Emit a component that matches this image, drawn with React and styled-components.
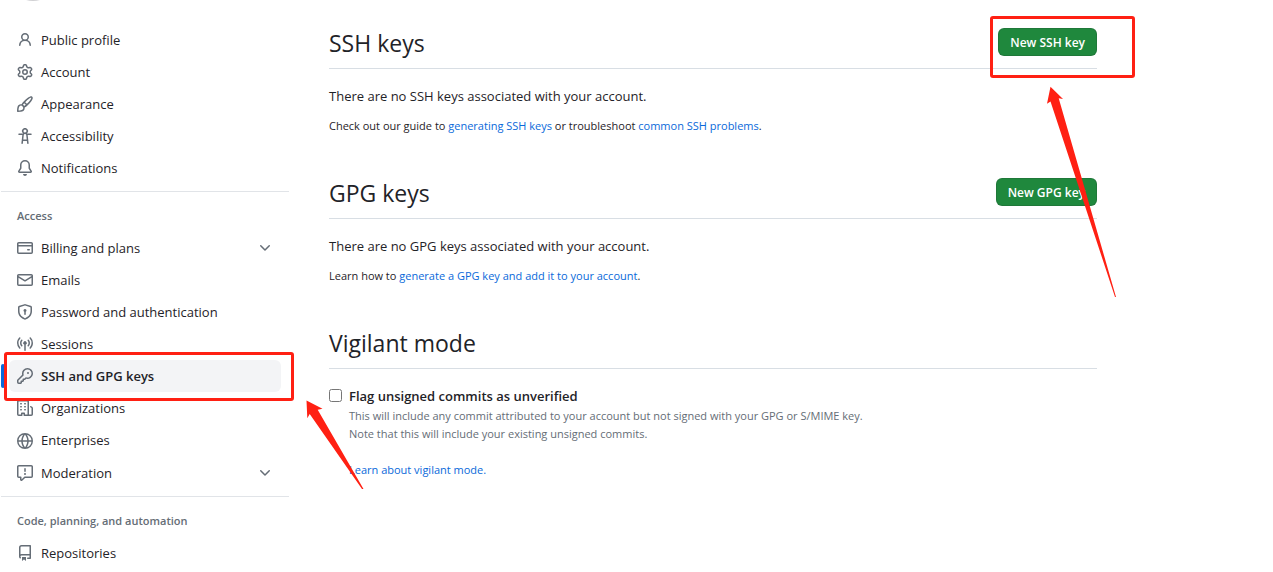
import React from 'react';
import styled, { createGlobalStyle } from 'styled-components';

const GlobalStyle = createGlobalStyle`
  body {
    margin: 0;
    background: #ffffff;
    color: #1f2328;
    font-family: 'Open Sans', 'Noto Sans', sans-serif;
    font-size: 13px;
    line-height: 21px;
  }
  * {
    box-sizing: border-box;
  }
`;

const icons = {
  person:
    'M10.561 8.073a6.005 6.005 0 0 1 3.432 5.142.75.75 0 1 1-1.498.07 4.5 4.5 0 0 0-8.99 0 .75.75 0 0 1-1.498-.07 6.004 6.004 0 0 1 3.431-5.142 3.999 3.999 0 1 1 5.123 0ZM10.5 5a2.5 2.5 0 1 0-5 0 2.5 2.5 0 0 0 5 0Z',
  gear: 'M8 0a8.2 8.2 0 0 1 .701.031C9.444.095 9.99.645 10.16 1.29l.288 1.107c.018.066.079.158.212.224.231.114.454.243.668.386.123.082.233.09.299.071l1.103-.303c.644-.176 1.392.021 1.82.63.27.385.506.792.704 1.218.315.675.111 1.422-.364 1.891l-.814.806c-.049.048-.098.147-.088.294.016.257.016.515 0 .772-.01.147.038.246.088.294l.814.806c.475.469.679 1.216.364 1.891a7.977 7.977 0 0 1-.704 1.217c-.428.61-1.176.807-1.82.63l-1.102-.302c-.067-.019-.177-.011-.3.071a5.909 5.909 0 0 1-.668.386c-.133.066-.194.158-.211.224l-.29 1.106c-.168.646-.715 1.196-1.458 1.26a8.006 8.006 0 0 1-1.402 0c-.743-.064-1.289-.614-1.458-1.26l-.289-1.106c-.018-.066-.079-.158-.212-.224a5.738 5.738 0 0 1-.668-.386c-.123-.082-.233-.09-.299-.071l-1.103.303c-.644.176-1.392-.021-1.82-.63a8.12 8.12 0 0 1-.704-1.218c-.315-.675-.111-1.422.363-1.891l.815-.806c.05-.048.098-.147.088-.294a6.214 6.214 0 0 1 0-.772c.01-.147-.038-.246-.088-.294l-.815-.806C.635 6.045.431 5.298.746 4.623a7.92 7.92 0 0 1 .704-1.217c.428-.61 1.176-.807 1.82-.63l1.102.302c.067.019.177.011.3-.071.214-.143.437-.272.668-.386.133-.066.194-.158.211-.224l.29-1.106C6.009.645 6.556.095 7.299.03 7.53.01 7.764 0 8 0Zm-.571 1.525c-.036.003-.108.036-.137.146l-.289 1.105c-.147.561-.549.967-.998 1.189-.173.086-.34.183-.5.29-.417.278-.97.423-1.529.27l-1.103-.303c-.109-.03-.175.016-.195.045-.22.312-.412.644-.573.99-.014.031-.021.11.059.19l.815.806c.411.406.562.957.53 1.456a4.709 4.709 0 0 0 0 .582c.032.499-.119 1.05-.53 1.456l-.815.806c-.081.08-.073.159-.059.19.162.346.353.677.573.989.02.03.085.076.195.046l1.102-.303c.56-.153 1.113-.008 1.53.27.161.107.328.204.501.29.447.222.85.629.997 1.189l.289 1.105c.029.109.101.143.137.146a6.6 6.6 0 0 0 1.142 0c.036-.003.108-.036.137-.146l.289-1.105c.147-.561.549-.967.998-1.189.173-.086.34-.183.5-.29.417-.278.97-.423 1.529-.27l1.103.303c.109.029.175-.016.195-.045.22-.313.411-.644.573-.99.014-.031.021-.11-.059-.19l-.815-.806c-.411-.406-.562-.957-.53-1.456a4.709 4.709 0 0 0 0-.582c-.032-.499.119-1.05.53-1.456l.815-.806c.081-.08.073-.159.059-.19a6.464 6.464 0 0 0-.573-.989c-.02-.03-.085-.076-.195-.046l-1.102.303c-.56.153-1.113.008-1.53-.27a4.44 4.44 0 0 0-.501-.29c-.447-.222-.85-.629-.997-1.189l-.289-1.105c-.029-.11-.101-.143-.137-.146a6.6 6.6 0 0 0-1.142 0ZM11 8a3 3 0 1 1-6 0 3 3 0 0 1 6 0ZM9.5 8a1.5 1.5 0 1 0-3.001.001A1.5 1.5 0 0 0 9.5 8Z',
  paintbrush:
    'M11.134 1.535c.7-.509 1.416-.942 2.076-1.155.649-.21 1.463-.267 2.069.34.603.601.568 1.411.368 2.07-.202.668-.624 1.39-1.125 2.096-1.011 1.424-2.496 2.987-3.775 4.249-1.098 1.084-2.132 1.839-3.04 2.3a3.744 3.744 0 0 1-1.055 3.217c-.431.431-1.065.691-1.657.861-.614.177-1.294.287-1.914.357A21.151 21.151 0 0 1 .797 16H.743a.75.75 0 0 1-.743-.742v-.054a21.25 21.25 0 0 1 .13-2.284c.067-.647.187-1.287.358-1.914.17-.591.43-1.226.86-1.657a3.746 3.746 0 0 1 3.227-1.054c.466-.893 1.225-1.907 2.314-2.982 1.271-1.255 2.833-2.75 4.245-3.777ZM1.62 13.089c-.051.464-.086.929-.104 1.395.466-.018.932-.053 1.396-.104a10.511 10.511 0 0 0 1.668-.309c.526-.151.856-.325 1.011-.48a2.25 2.25 0 1 0-3.182-3.182c-.155.155-.329.485-.48 1.01a10.515 10.515 0 0 0-.309 1.67Zm10.396-10.34c-1.224.89-2.605 2.189-3.822 3.384l1.718 1.718c1.21-1.205 2.51-2.597 3.387-3.833.47-.662.78-1.227.912-1.662.134-.444.032-.551.009-.575h-.001V1.78c-.014-.014-.113-.113-.548.027-.432.14-.995.462-1.655.942Zm-4.832 7.266-.001.001a9.859 9.859 0 0 0 1.63-1.142L7.155 7.216a9.7 9.7 0 0 0-1.161 1.607c.482.302.889.71 1.19 1.192Z',
  accessibility:
    'M9.923 5.302c.063.063.122.129.178.198H14A.75.75 0 0 1 14 7h-3.3l.578 5.163.362 2.997a.75.75 0 0 1-1.49.18L9.868 13H6.132l-.282 2.34a.75.75 0 0 1-1.49-.18l.362-2.997L5.3 7H2a.75.75 0 0 1 0-1.5h3.9a2.54 2.54 0 0 1 .176-.198 3 3 0 1 1 3.847 0ZM9.2 7.073h-.001a1.206 1.206 0 0 0-2.398 0L6.305 11.5h3.39ZM9.5 3a1.5 1.5 0 1 0-3.001.001A1.5 1.5 0 0 0 9.5 3Z',
  bell: 'M8 16a2 2 0 0 0 1.985-1.75c.017-.137-.097-.25-.235-.25h-3.5c-.138 0-.252.113-.235.25A2 2 0 0 0 8 16ZM3 5a5 5 0 0 1 10 0v2.947c0 .05.015.098.042.139l1.703 2.555A1.519 1.519 0 0 1 13.482 13H2.518a1.516 1.516 0 0 1-1.263-2.36l1.703-2.554A.255.255 0 0 0 3 7.947Zm5-3.5A3.5 3.5 0 0 0 4.5 5v2.947c0 .346-.102.683-.294.97l-1.703 2.556a.017.017 0 0 0-.003.01l.001.006c0 .002.002.004.004.006l.006.004.007.001h10.964l.007-.001.006-.004.004-.006.001-.007a.017.017 0 0 0-.003-.01l-1.703-2.554a1.745 1.745 0 0 1-.294-.97V5A3.5 3.5 0 0 0 8 1.5Z',
  card: 'M10.75 9a.75.75 0 0 0 0 1.5h1.5a.75.75 0 0 0 0-1.5h-1.5ZM0 3.75C0 2.784.784 2 1.75 2h12.5c.966 0 1.75.784 1.75 1.75v8.5A1.75 1.75 0 0 1 14.25 14H1.75A1.75 1.75 0 0 1 0 12.25ZM14.5 6.5h-13v5.75c0 .138.112.25.25.25h12.5a.25.25 0 0 0 .25-.25Zm0-2.75a.25.25 0 0 0-.25-.25H1.75a.25.25 0 0 0-.25.25V5h13Z',
  mail: 'M1.75 2h12.5c.966 0 1.75.784 1.75 1.75v8.5A1.75 1.75 0 0 1 14.25 14H1.75A1.75 1.75 0 0 1 0 12.25v-8.5C0 2.784.784 2 1.75 2ZM1.5 12.251c0 .138.112.25.25.25h12.5a.25.25 0 0 0 .25-.25V5.809L8.38 9.397a.75.75 0 0 1-.76 0L1.5 5.809v6.442Zm13-8.181v-.32a.25.25 0 0 0-.25-.25H1.75a.25.25 0 0 0-.25.25v.32L8 7.88Z',
  shield:
    'm8.533.133 5.25 1.68A1.75 1.75 0 0 1 15 3.48V7c0 1.566-.32 3.182-1.303 4.682-.983 1.498-2.585 2.813-5.032 3.855a1.697 1.697 0 0 1-1.33 0c-2.447-1.042-4.049-2.357-5.032-3.855C1.32 10.182 1 8.566 1 7V3.48a1.75 1.75 0 0 1 1.217-1.667l5.25-1.68a1.748 1.748 0 0 1 1.066 0Zm-.61 1.429.001.001-5.25 1.68a.251.251 0 0 0-.174.237V7c0 1.36.275 2.666 1.057 3.859.784 1.194 2.121 2.342 4.366 3.298a.196.196 0 0 0 .154 0c2.245-.957 3.582-2.103 4.366-3.297C13.225 9.666 13.5 8.358 13.5 7V3.48a.25.25 0 0 0-.174-.238l-5.25-1.68a.25.25 0 0 0-.153 0ZM9.5 6.5c0 .536-.286 1.032-.75 1.3v2.45a.75.75 0 0 1-1.5 0V7.8A1.5 1.5 0 1 1 9.5 6.5Z',
  broadcast:
    'M8.75 8.582v5.668a.75.75 0 0 1-1.5 0V8.582a1.75 1.75 0 1 1 1.5 0Zm3.983-7.125a.75.75 0 0 1 1.06.026A7.976 7.976 0 0 1 16 7c0 2.139-.84 4.083-2.207 5.517a.75.75 0 1 1-1.086-1.034A6.474 6.474 0 0 0 14.5 7a6.474 6.474 0 0 0-1.793-4.483.75.75 0 0 1 .026-1.06Zm-9.466 0c.3.286.312.76.026 1.06A6.474 6.474 0 0 0 1.5 7a6.47 6.47 0 0 0 1.793 4.483.75.75 0 0 1-1.086 1.034A7.973 7.973 0 0 1 0 7c0-2.139.84-4.083 2.207-5.517a.75.75 0 0 1 1.06-.026Zm8.556 2.321A4.988 4.988 0 0 1 13 7a4.988 4.988 0 0 1-1.177 3.222.75.75 0 1 1-1.146-.967A3.487 3.487 0 0 0 11.5 7c0-.86-.309-1.645-.823-2.255a.75.75 0 0 1 1.146-.967Zm-6.492.958A3.48 3.48 0 0 0 4.5 7a3.48 3.48 0 0 0 .823 2.255.75.75 0 0 1-1.146.967A4.981 4.981 0 0 1 3 7a4.982 4.982 0 0 1 1.188-3.236.75.75 0 1 1 1.143.972Z',
  key: 'M10.5 0a5.499 5.499 0 1 1-1.288 10.848l-.932.932a.749.749 0 0 1-.53.22H7v.75a.749.749 0 0 1-.22.53l-.5.5a.749.749 0 0 1-.53.22H5v.75a.749.749 0 0 1-.22.53l-.5.5a.749.749 0 0 1-.53.22h-2A1.75 1.75 0 0 1 0 14.25v-2c0-.199.079-.389.22-.53l4.932-4.932A5.5 5.5 0 0 1 10.5 0Zm-4 5.5c-.001.431.069.86.205 1.269a.75.75 0 0 1-.181.768L1.5 12.56v1.69c0 .138.112.25.25.25h1.69l.06-.06v-1.19a.75.75 0 0 1 .75-.75h1.19l.06-.06v-1.19a.75.75 0 0 1 .75-.75h1.19l1.023-1.025a.75.75 0 0 1 .768-.18A4 4 0 1 0 6.5 5.5ZM11 6a1 1 0 1 1 0-2 1 1 0 0 1 0 2Z',
  organization:
    'M1.75 16A1.75 1.75 0 0 1 0 14.25V1.75C0 .784.784 0 1.75 0h8.5C11.216 0 12 .784 12 1.75v12.5c0 .085-.006.168-.018.25h2.268a.25.25 0 0 0 .25-.25V8.285a.25.25 0 0 0-.111-.208l-1.055-.703a.749.749 0 1 1 .832-1.248l1.055.703c.487.325.779.871.779 1.456v5.965A1.75 1.75 0 0 1 14.25 16h-3.5a.766.766 0 0 1-.197-.026c-.099.017-.2.026-.303.026h-3a.75.75 0 0 1-.75-.75V14h-1v1.25a.75.75 0 0 1-.75.75Zm-.25-1.75c0 .138.112.25.25.25H4v-1.25a.75.75 0 0 1 .75-.75h2.5a.75.75 0 0 1 .75.75v1.25h2.25a.25.25 0 0 0 .25-.25V1.75a.25.25 0 0 0-.25-.25h-8.5a.25.25 0 0 0-.25.25ZM3.75 6h.5a.75.75 0 0 1 0 1.5h-.5a.75.75 0 0 1 0-1.5ZM3 3.75A.75.75 0 0 1 3.75 3h.5a.75.75 0 0 1 0 1.5h-.5A.75.75 0 0 1 3 3.75Zm4 3A.75.75 0 0 1 7.75 6h.5a.75.75 0 0 1 0 1.5h-.5A.75.75 0 0 1 7 6.75ZM7.75 3h.5a.75.75 0 0 1 0 1.5h-.5a.75.75 0 0 1 0-1.5ZM3 9.75A.75.75 0 0 1 3.75 9h.5a.75.75 0 0 1 0 1.5h-.5A.75.75 0 0 1 3 9.75ZM7.75 9h.5a.75.75 0 0 1 0 1.5h-.5a.75.75 0 0 1 0-1.5Z',
  globe:
    'M8 0a8 8 0 1 1 0 16A8 8 0 0 1 8 0ZM5.78 8.75a9.64 9.64 0 0 0 1.363 4.177c.255.426.542.832.857 1.215.245-.296.551-.705.857-1.215A9.64 9.64 0 0 0 10.22 8.75Zm4.44-1.5a9.64 9.64 0 0 0-1.363-4.177c-.307-.51-.612-.919-.857-1.215a9.927 9.927 0 0 0-.857 1.215A9.64 9.64 0 0 0 5.78 7.25Zm-5.944 1.5H1.543a6.507 6.507 0 0 0 4.666 5.5c-.123-.181-.24-.365-.352-.552-.715-1.192-1.437-2.874-1.581-4.948Zm-2.733-1.5h2.733c.144-2.074.866-3.756 1.58-4.948.12-.197.237-.381.353-.552a6.507 6.507 0 0 0-4.666 5.5Zm10.181 1.5c-.144 2.074-.866 3.756-1.58 4.948-.12.197-.237.381-.353.552a6.507 6.507 0 0 0 4.666-5.5Zm2.733-1.5a6.507 6.507 0 0 0-4.666-5.5c.123.181.24.365.353.552.714 1.192 1.436 2.874 1.58 4.948Z',
  report:
    'M0 1.75C0 .784.784 0 1.75 0h12.5C15.216 0 16 .784 16 1.75v9.5A1.75 1.75 0 0 1 14.25 13H8.06l-2.573 2.573A1.458 1.458 0 0 1 3 14.543V13H1.75A1.75 1.75 0 0 1 0 11.25Zm1.75-.25a.25.25 0 0 0-.25.25v9.5c0 .138.112.25.25.25h2a.75.75 0 0 1 .75.75v2.19l2.72-2.72a.749.749 0 0 1 .53-.22h6.5a.25.25 0 0 0 .25-.25v-9.5a.25.25 0 0 0-.25-.25Zm7 2.25v2.5a.75.75 0 0 1-1.5 0v-2.5a.75.75 0 0 1 1.5 0ZM9 9a1 1 0 1 1-2 0 1 1 0 0 1 2 0Z',
  repo: 'M2 2.5A2.5 2.5 0 0 1 4.5 0h8.75a.75.75 0 0 1 .75.75v12.5a.75.75 0 0 1-.75.75h-2.5a.75.75 0 0 1 0-1.5h1.75v-2h-8a1 1 0 0 0-.714 1.7.75.75 0 1 1-1.072 1.05A2.495 2.495 0 0 1 2 11.5Zm10.5-1h-8a1 1 0 0 0-1 1v6.708A2.486 2.486 0 0 1 4.5 9h8ZM5 12.25a.25.25 0 0 1 .25-.25h3.5a.25.25 0 0 1 .25.25v3.25a.25.25 0 0 1-.4.2l-1.45-1.087a.249.249 0 0 0-.3 0L5.4 15.7a.25.25 0 0 1-.4-.2Z',
  chevron:
    'M12.78 5.22a.749.749 0 0 1 0 1.06l-4.25 4.25a.749.749 0 0 1-1.06 0L3.22 6.28a.749.749 0 1 1 1.06-1.06L8 8.939l3.72-3.719a.749.749 0 0 1 1.06 0Z',
};

const Page = styled.div`
  display: flex;
  gap: 40px;
  padding-left: 1px;
`;

const Sidebar = styled.aside`
  flex: none;
  width: 288px;
`;

const Profile = styled.div`
  display: flex;
  align-items: flex-end;
  height: 1px;
  margin-bottom: 23px;
  padding-left: 8px;
  overflow: hidden;
`;

const Avatar = styled.span`
  flex: none;
  width: 48px;
  height: 48px;
  border-radius: 50%;
  background: #d0d0d3;
`;

const NavGroup = styled.ul`
  list-style: none;
  margin: 0;
  padding: 0 8px;

  & + & {
    border-top: 1px solid #e1e4e8;
    margin-top: 7px;
    padding-top: 8px;
  }
`;

const NavHeading = styled.li`
  padding: 0 8px;
  color: #656d76;
  font-size: 11px;
  font-weight: 600;
  line-height: 32px;
`;

const NavItem = styled.li`
  position: relative;

  &[data-active='true']::before {
    content: '';
    position: absolute;
    top: 4px;
    left: -8px;
    width: 4px;
    height: 24px;
    border-radius: 6px;
    background: #0969da;
  }
`;

const NavLink = styled.a`
  display: flex;
  align-items: center;
  gap: 8px;
  height: ${(props) => (props.$tall ? 33 : 32)}px;
  padding: 0 8px;
  border-radius: 6px;
  color: #1f2328;
  background: ${(props) => (props.$active ? '#f3f4f6' : 'transparent')};
  font-weight: ${(props) => (props.$active ? 600 : 400)};
  text-decoration: none;

  span {
    flex: 1;
  }
`;

const Octicon = styled.svg`
  flex: none;
  width: 16px;
  height: 16px;
  fill: #656d76;
`;

const Main = styled.main`
  flex: 0 1 768px;
  padding-top: 28px;
`;

const Section = styled.section`
  margin-bottom: 43px;
`;

const SectionHeader = styled.div`
  position: relative;
  display: flex;
  align-items: flex-start;
  justify-content: space-between;
  min-height: 41px;
  margin-bottom: 17px;
  border-bottom: 1px solid #d8dee4;

  h2 {
    margin: 0;
    font-size: 23px;
    font-weight: 400;
    line-height: 30px;
  }
`;

const PrimaryButton = styled.button`
  height: 28px;
  padding: 0 11px;
  border: 1px solid rgba(31, 35, 40, 0.15);
  border-radius: 6px;
  background: #1f883d;
  color: #ffffff;
  font: 600 12px 'Open Sans', 'Noto Sans', sans-serif;
  cursor: pointer;
`;

const Text = styled.p`
  margin: 0 0 10px;
`;

const SmallText = styled.p`
  margin: 0;
  color: ${(props) => (props.$muted ? '#656d76' : 'inherit')};
  font-size: 11px;
  line-height: 18px;

  a {
    color: #0969da;
    text-decoration: none;
  }
`;

const CheckRow = styled.div`
  display: flex;
  gap: 7px;

  input {
    flex: none;
    width: 13px;
    height: 13px;
    margin: 3px 0 0;
  }
  label {
    font-weight: 600;
  }
`;

// red marker drawn over the page
const Marker = styled.div`
  position: absolute;
  top: ${(props) => props.$top}px;
  left: ${(props) => props.$left}px;
  z-index: 1;
  width: ${(props) => props.$width}px;
  height: ${(props) => props.$height}px;
  border: 3px solid #ff2013;
  border-radius: 3px;
  pointer-events: none;

  svg {
    position: absolute;
    top: 100%;
    left: 0;
    overflow: visible;
    fill: #ff2013;
  }
`;

function Icon({ name }) {
  return (
    <Octicon viewBox="0 0 16 16" aria-hidden="true">
      <path d={icons[name]} />
    </Octicon>
  );
}

function Item({ icon, label, active, tall, expandable, children }) {
  return (
    <NavItem data-active={!!active}>
      <NavLink href="#" $active={active} $tall={tall}>
        <Icon name={icon} />
        <span>{label}</span>
        {expandable && <Icon name="chevron" />}
      </NavLink>
      {children}
    </NavItem>
  );
}

export default function App() {
  return (
    <>
      <GlobalStyle />
      <Page>
        <Sidebar>
          <Profile>
            <Avatar />
          </Profile>
          <nav>
            <NavGroup>
              <Item icon="person" label="Public profile" />
              <Item icon="gear" label="Account" />
              <Item icon="paintbrush" label="Appearance" />
              <Item icon="accessibility" label="Accessibility" />
              <Item icon="bell" label="Notifications" />
            </NavGroup>
            <NavGroup>
              <NavHeading>Access</NavHeading>
              <Item icon="card" label="Billing and plans" expandable />
              <Item icon="mail" label="Emails" />
              <Item icon="shield" label="Password and authentication" />
              <Item icon="broadcast" label="Sessions" />
              <Item icon="key" label="SSH and GPG keys" active>
                <Marker $top={-8} $left={-5} $width={290} $height={49}>
                  <svg width="60" height="90">
                    <path d="M299.5 2.5 315.5 10.7 310.7 11.7 356.5 91 355 91 302.7 16 300.3 20.3Z" />
                  </svg>
                </Marker>
              </Item>
              <Item icon="organization" label="Organizations" />
              <Item icon="globe" label="Enterprises" tall />
              <Item icon="report" label="Moderation" expandable />
            </NavGroup>
            <NavGroup>
              <NavHeading>Code, planning, and automation</NavHeading>
              <Item icon="repo" label="Repositories" />
            </NavGroup>
          </nav>
        </Sidebar>
        <Main>
          <Section>
            <SectionHeader>
              <h2>SSH keys</h2>
              <PrimaryButton type="button">New SSH key</PrimaryButton>
              <Marker $top={-12} $left={661} $width={145} $height={62}>
                <svg width="80" height="220">
                  <path d="M57.5 11.7 70 24 65.7 23.3 123 222 122 222 57.5 26.5 54 28.7Z" />
                </svg>
              </Marker>
            </SectionHeader>
            <Text>There are no SSH keys associated with your account.</Text>
            <SmallText>
              Check out our guide to <a href="#">generating SSH keys</a> or
              troubleshoot <a href="#">common SSH problems</a>.
            </SmallText>
          </Section>
          <Section>
            <SectionHeader>
              <h2>GPG keys</h2>
              <PrimaryButton type="button">New GPG key</PrimaryButton>
            </SectionHeader>
            <Text>There are no GPG keys associated with your account.</Text>
            <SmallText>
              Learn how to{' '}
              <a href="#">generate a GPG key and add it to your account</a>.
            </SmallText>
          </Section>
          <Section>
            <SectionHeader>
              <h2>Vigilant mode</h2>
            </SectionHeader>
            <CheckRow>
              <input type="checkbox" id="vigilant" />
              <div>
                <label htmlFor="vigilant">
                  Flag unsigned commits as unverified
                </label>
                <SmallText $muted>
                  This will include any commit attributed to your account but
                  not signed with your GPG or S/MIME key.
                  <br />
                  Note that this will include your existing unsigned commits.
                  <br />
                  <br />
                  <a href="#">Learn about vigilant mode.</a>
                </SmallText>
              </div>
            </CheckRow>
          </Section>
        </Main>
      </Page>
    </>
  );
}
